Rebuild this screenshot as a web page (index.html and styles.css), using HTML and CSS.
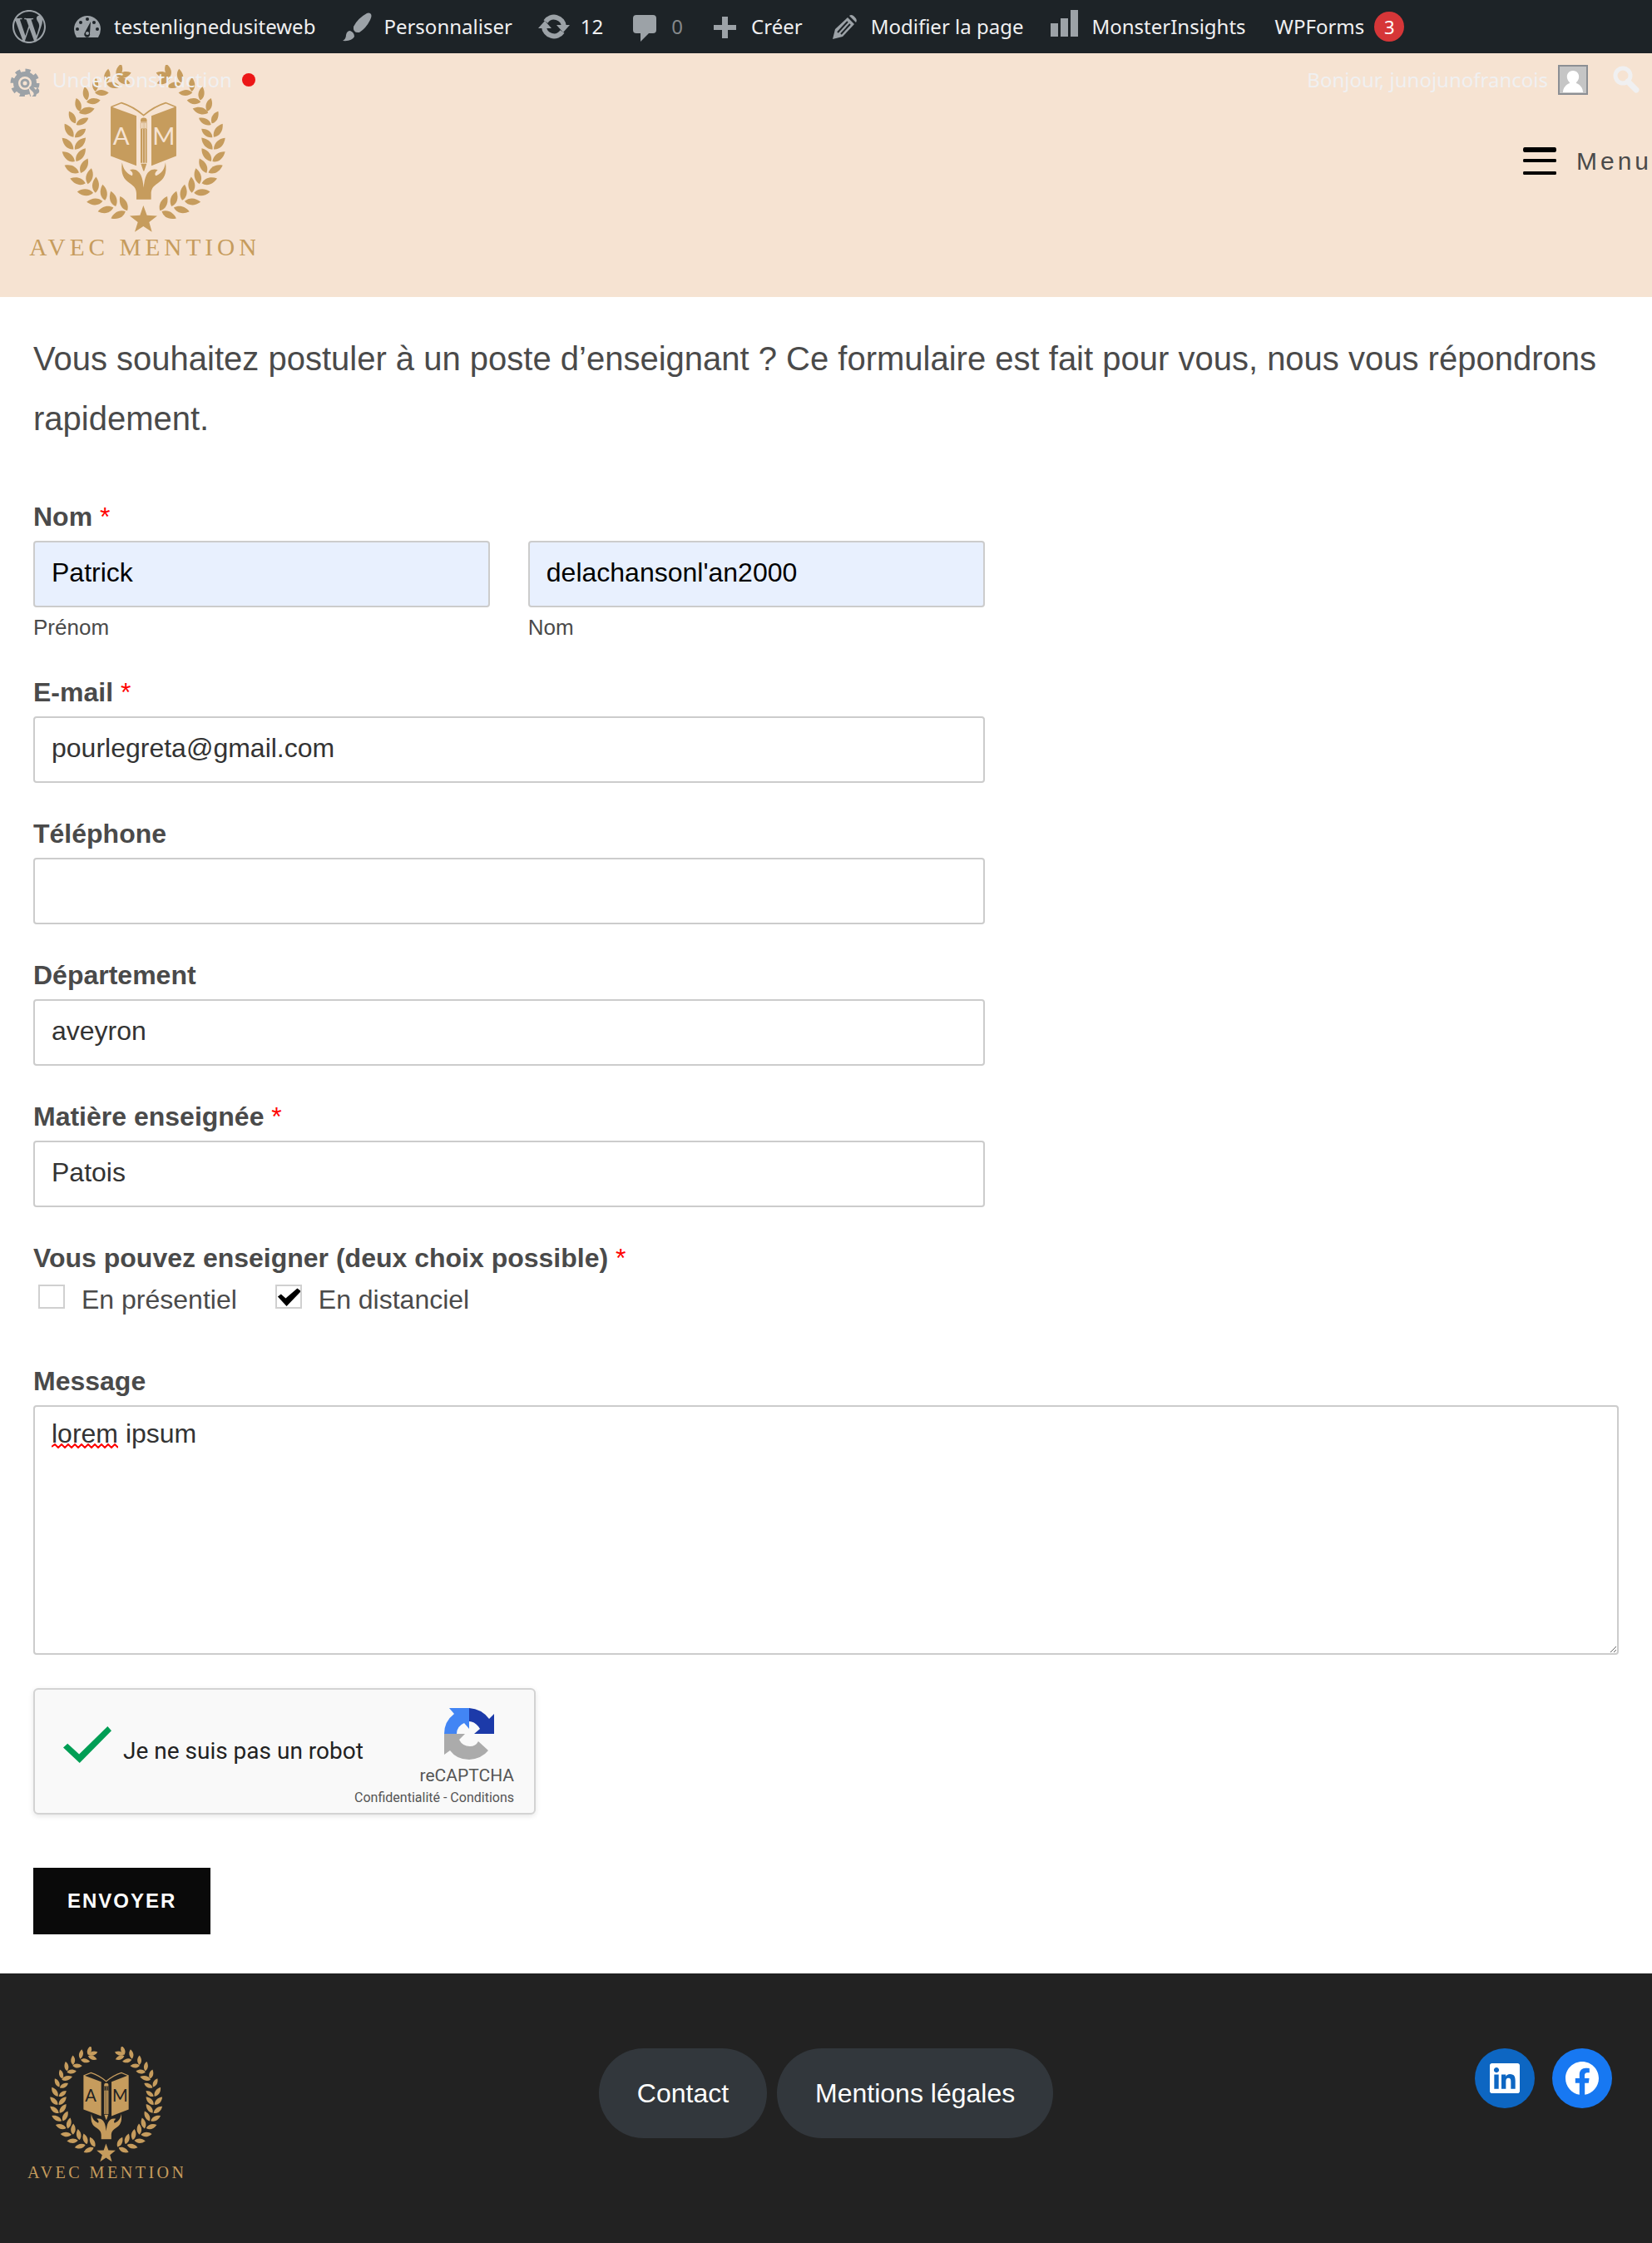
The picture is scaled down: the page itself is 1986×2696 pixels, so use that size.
FILE: index.html
```html
<!DOCTYPE html>
<html lang="fr">
<head>
<meta charset="utf-8">
<meta name="viewport" content="width=device-width, initial-scale=1">
<title>Postuler – Avec Mention</title>
<link rel="stylesheet" href="styles.css">
</head>
<body>
<svg class="sprite" aria-hidden="true">
  <defs>
    <path id="leaf" d="M0-2C-15-14-18-38 0-60C15-42 16-18 0-2Z"/>
    <path id="leaf-s" d="M0-2C-13-12-16-32-1-52C14-38 14-16 0-2Z"/>
    <g id="branch">
      <use href="#leaf-s" transform="translate(303 100) rotate(16)"/>
      <use href="#leaf-s" transform="translate(303 97) rotate(74)"/>
      <use href="#leaf-s" transform="translate(301 102) rotate(112)"/>
      <use href="#leaf-s" transform="translate(262 120) rotate(10)"/>
      <use href="#leaf-s" transform="translate(262 122) rotate(102)"/>
      <use href="#leaf-s" transform="translate(224 152)"/>
      <use href="#leaf-s" transform="translate(220 154) rotate(92)"/>
      <use href="#leaf-s" transform="translate(194 184) rotate(-9)"/>
      <use href="#leaf-s" transform="translate(190 188) rotate(84)"/>
      <use href="#leaf-s" transform="translate(169 224) rotate(-15)"/>
      <use href="#leaf" transform="translate(163 228) rotate(74)"/>
      <use href="#leaf-s" transform="translate(153 267) rotate(-27)"/>
      <use href="#leaf-s" transform="translate(153 271) rotate(62)"/>
      <use href="#leaf" transform="translate(146 316) rotate(-34)"/>
      <use href="#leaf-s" transform="translate(148 317) rotate(53)"/>
      <use href="#leaf" transform="translate(146 360) rotate(-45)"/>
      <use href="#leaf" transform="translate(148 361) rotate(43)"/>
      <use href="#leaf" transform="translate(151 404) rotate(-52)"/>
      <use href="#leaf" transform="translate(153 404) rotate(36)"/>
      <use href="#leaf" transform="translate(166 444) rotate(-63)"/>
      <use href="#leaf" transform="translate(170 446) rotate(26)"/>
      <use href="#leaf" transform="translate(190 482) rotate(-73)"/>
      <use href="#leaf" transform="translate(196 486) rotate(13)"/>
      <use href="#leaf" transform="translate(218 516) rotate(-86)"/>
      <use href="#leaf" transform="translate(224 518) rotate(2)"/>
      <use href="#leaf" transform="translate(252 546) rotate(-93)"/>
      <use href="#leaf" transform="translate(259 545) rotate(-9)"/>
      <use href="#leaf" transform="translate(291 569) rotate(-104)"/>
      <use href="#leaf" transform="translate(298 567) rotate(-18)"/>
      <use href="#leaf" transform="translate(334 582) rotate(-116)"/>
      <use href="#leaf" transform="translate(340 582) rotate(-27)"/>
    </g>
    <symbol id="logo" viewBox="-15 54 816 694">
      <use href="#branch"/>
      <use href="#branch" transform="translate(796 0) scale(-1 1)"/>
      <path d="M279 204L372 238V418L279 383ZM516 204L426 238V418L516 383Z"/>
      <path d="M281 206L318 191Q360 204 398 236Q436 204 478 191L514 206" fill="none" stroke="currentColor" stroke-width="5"/>
      <path d="M387 260V255Q387 245 398 245Q410 245 410 255V260Z"/>
      <path d="M388 262H409V284H388ZM396 263V283M402 263V283" fill="none" stroke="currentColor" stroke-width="2"/>
      <path d="M387 285H393V408H387ZM395 285H402V408H395ZM404 285H410V408H404ZM388 411H409L400 437H397Z"/>
      <path d="M320 406C315 450 326 466 348 481C366 493 372 503 372 520V540H425V520C425 503 431 493 449 481C471 466 483 450 477 406C473 432 464 444 443 454C436 450 440 440 449 433C430 427 416 436 408 452C402 464 400 480 398 497C396 480 394 464 388 452C380 436 366 427 348 433C358 440 361 448 356 454C334 444 325 430 320 406Z"/>
      <path d="M397 562L410 597L447 599L418 622L428 657L397 637L366 657L377 622L348 599L385 597Z"/>
      <text class="logo-letter" x="287" y="341">A</text>
      <text class="logo-letter" x="430" y="341">M</text>
      <text class="logo-name" x="-15" y="742">AVEC MENTION</text>
    </symbol>
  </defs>
</svg>

<nav class="adminbar" aria-label="Barre d’outils">
  <a href="#" aria-label="WordPress"><svg class="ab-icon" viewBox="0 0 24 24"><path d="M21.469 6.825c.84 1.537 1.318 3.3 1.318 5.175 0 3.979-2.156 7.456-5.363 9.325l3.295-9.527c.615-1.54.82-2.771.82-3.864 0-.405-.026-.78-.07-1.11m-7.981.105c.647-.03 1.232-.105 1.232-.105.582-.075.514-.93-.067-.899 0 0-1.755.135-2.88.135-1.064 0-2.85-.15-2.85-.15-.585-.03-.661.855-.075.885 0 0 .54.061 1.125.09l1.68 4.605-2.37 7.08L5.354 6.9c.649-.03 1.234-.1 1.234-.1.585-.075.516-.93-.065-.896 0 0-1.746.138-2.874.138-.2 0-.438-.008-.69-.015C4.911 3.15 8.235 1.215 12 1.215c2.809 0 5.365 1.072 7.286 2.833-.046-.003-.091-.009-.141-.009-1.06 0-1.812.923-1.812 1.914 0 .89.513 1.643 1.06 2.531.411.72.89 1.643.89 2.977 0 .915-.354 1.994-.821 3.479l-1.075 3.585-3.9-11.61.001.014zM12 22.784c-1.059 0-2.081-.153-3.048-.437l3.237-9.406 3.315 9.087c.024.053.05.101.078.149-1.12.393-2.325.609-3.582.609M1.211 12c0-1.564.336-3.05.935-4.39L7.29 21.709C3.694 19.96 1.212 16.271 1.211 12M12 0C5.385 0 0 5.385 0 12s5.385 12 12 12 12-5.385 12-12S18.615 0 12 0"/></svg></a>
  <a href="#"><svg class="ab-icon" viewBox="0 0 40 40"><path d="M7 33Q4 28 4 23A16 16 0 0 1 36 23Q36 28 33 33Z"/><g fill="#1d2327"><circle cx="20" cy="11" r="2"/><circle cx="12" cy="15" r="2"/><circle cx="28" cy="15" r="2"/><circle cx="8" cy="23" r="2"/><circle cx="32" cy="23" r="2"/><path d="M24 14L23 28A3.500 3.500 0 1 1 17 27Z"/></g><circle cx="20" cy="28" r="2"/></svg>testenlignedusiteweb</a>
  <a href="#"><svg class="ab-icon" viewBox="0 0 40 40"><path d="M36 4Q39 6 36 12Q31 22 23 27Q15 28 16 20Q21 10 32 4Q34 3 36 4ZM12 25Q17 27 17 32Q14 38 3 37Q7 35 7 30Q8 25 12 25Z"/></svg>Personnaliser</a>
  <a href="#"><svg class="ab-icon" viewBox="0 0 40 40"><path d="M10 14A12 12 0 0 1 32 20M30 26A12 12 0 0 1 8 20" fill="none" stroke="currentColor" stroke-width="6"/><path d="M1 22L9 13L17 22ZM23 18H39L31 27Z"/></svg>12</a>
  <a class="muted" href="#"><svg class="ab-icon" viewBox="0 0 40 40"><path d="M10 6H30Q34 6 34 10V24Q34 28 30 28H25L15 38V28H10Q6 28 6 24V10Q6 6 10 6Z"/></svg>0</a>
  <a href="#"><svg class="ab-icon" viewBox="0 0 40 40"><path d="M17 8H24V18H34V24H24V34H17V24H7V18H17Z"/></svg>Créer</a>
  <a href="#"><svg class="ab-icon" viewBox="0 0 40 40"><path d="M26 7L34 15Q36 12 33 9L31 7Q28 5 26 7ZM24 9L32 17L18 32L6 35L9 23Z"/><path d="M12 27L24 14M16 29L27 17" stroke="#1d2327" stroke-width="2"/></svg>Modifier la page</a>
  <a href="#"><svg class="ab-icon" viewBox="0 0 40 40"><path d="M3 16H12V32H3ZM15 10H24V32H15ZM27 0H36V32H27Z"/></svg>MonsterInsights</a>
  <a class="wpforms" href="#">WPForms<span class="count">3</span></a>
</nav>

<header class="site-header">
  <div class="adminbar-overflow">
    <a href="#"><svg class="ab-icon" viewBox="-1 -8 40 40"><g fill="none" stroke="currentColor"><circle cx="18" cy="16" r="11" stroke-width="6"/><circle cx="18" cy="16" r="15" stroke-width="5" stroke-dasharray="6 5.780"/><circle cx="18" cy="16" r="4" stroke-width="3"/></g><path d="M22 20L37 22V35H26Z" fill="#f6e3d2"/><path d="M24 20L27 19L31 24Q33 22 32 20L35 24Q36 28 32 29L31 32L26 32Q30 30 28 27L23 22Z"/></svg>UnderConstruction<span class="status"></span></a>
    <a class="account" href="#">Bonjour, junojunofrancois<svg class="avatar" viewBox="0 0 36 36"><path d="M0 0H36V36H0Z" fill="#8c8f94"/><path d="M2 2H34V34H2Z" fill="#c5c5c5"/><path d="M18 7C23 7 26 11 25 16C24 20 22 20 22 22C27 24 30 28 30 33H6C6 28 9 24 14 22C14 20 12 20 11 16C10 11 13 7 18 7Z" fill="#fff"/></svg></a>
    <a class="search" href="#" aria-label="Rechercher"><svg class="ab-icon" viewBox="0 0 40 40"><circle cx="16" cy="15" r="9" fill="none" stroke="currentColor" stroke-width="5"/><path d="M22 22L32 32" stroke="currentColor" stroke-width="7" stroke-linecap="round"/></svg></a>
  </div>
  <a class="brand" href="#" aria-label="Avec Mention"><svg class="logo"><use href="#logo"/></svg></a>
  <button class="menu-button" type="button"><svg class="burger" viewBox="0 0 40 34"><path d="M2 0H38Q40 0 40 3Q40 6 38 6H2Q0 6 0 3Q0 0 2 0ZM1 14H39Q40 14 40 16T39 18H1Q0 18 0 16T1 14ZM1 29H39Q40 29 40 31T39 33H1Q0 33 0 31T1 29Z"/></svg>Menu</button>
</header>

<main class="content">
  <p class="intro">Vous souhaitez postuler à un poste d’enseignant ? Ce formulaire est fait pour vous, nous vous répondrons rapidement.</p>
  <form class="form">
    <fieldset class="field medium">
      <legend class="label">Nom <span class="required">*</span></legend>
      <div class="name-row">
        <div class="name-part"><input class="input autofilled" id="prenom" type="text" value="Patrick"><label class="sublabel" for="prenom">Prénom</label></div>
        <div class="name-part"><input class="input autofilled" id="nom" type="text" value="delachansonl'an2000"><label class="sublabel" for="nom">Nom</label></div>
      </div>
    </fieldset>
    <div class="field medium"><label class="label" for="email">E-mail <span class="required">*</span></label><input class="input" id="email" type="email" value="pourlegreta@gmail.com"></div>
    <div class="field medium"><label class="label" for="tel">Téléphone</label><input class="input" id="tel" type="tel"></div>
    <div class="field medium"><label class="label" for="dep">Département</label><input class="input" id="dep" type="text" value="aveyron"></div>
    <div class="field medium"><label class="label" for="matiere">Matière enseignée <span class="required">*</span></label><input class="input" id="matiere" type="text" value="Patois"></div>
    <fieldset class="field choices">
      <legend class="label">Vous pouvez enseigner (deux choix possible) <span class="required">*</span></legend>
      <div class="choice-row">
        <label class="choice"><input class="checkbox" type="checkbox">En présentiel</label>
        <label class="choice"><input class="checkbox" type="checkbox" checked>En distanciel</label>
      </div>
    </fieldset>
    <div class="field message">
      <label class="label" for="message">Message</label>
      <textarea class="input textarea" id="message" spellcheck="false">lorem ipsum</textarea>
      <svg class="squiggle" viewBox="0 0 80 6"><path d="M0 4L4 1L8 5L12 1L16 5L20 1L24 5L28 1L32 5L36 1L40 5L44 1L48 5L52 1L56 5L60 1L64 5L68 1L72 5L76 1L80 5" fill="none" stroke="#f00" stroke-width="2"/></svg>
    </div>
    <div class="captcha">
      <label class="robot"><input class="robot-check" type="checkbox" checked>Je ne suis pas un robot</label>
      <div class="captcha-brand">
        <svg class="captcha-logo" viewBox="0 0 60 62"><path d="M60 31V7L54 13Q45 1 30 0V16Q36 16 41 22L43 25L36 31Z" fill="#1c3aa9"/><path d="M30 0H6L12 7Q0 16 0 31H15Q15 22 24 18L30 25Z" fill="#4285f4"/><path d="M0 31V56L7 51Q15 62 30 62Q45 61 53 51L41 40Q38 46 31 46Q22 46 18 38L25 31Z" fill="#ababab"/></svg>
        <span class="captcha-name">reCAPTCHA</span>
        <span class="captcha-links"><a href="#">Confidentialité</a> - <a href="#">Conditions</a></span>
      </div>
    </div>
    <button class="submit" type="submit">ENVOYER</button>
  </form>
</main>

<footer class="site-footer">
  <a class="footer-brand" href="#" aria-label="Avec Mention"><svg class="logo"><use href="#logo"/></svg></a>
  <nav class="footer-nav"><a href="#">Contact</a><a href="#">Mentions légales</a></nav>
  <div class="social">
    <a class="linkedin" href="#" aria-label="LinkedIn"><svg viewBox="0 0 24 24"><path d="M19.7,3H4.3C3.582,3,3,3.582,3,4.3v15.4C3,20.418,3.582,21,4.3,21h15.4c0.718,0,1.3-0.582,1.3-1.3V4.3 C21,3.582,20.418,3,19.7,3z M8.339,18.338H5.667v-8.59h2.672V18.338z M7.004,8.574c-0.857,0-1.549-0.694-1.549-1.548 c0-0.855,0.691-1.548,1.549-1.548c0.854,0,1.547,0.694,1.547,1.548C8.551,7.881,7.858,8.574,7.004,8.574z M18.339,18.338h-2.669 v-4.177c0-0.996-0.017-2.278-1.387-2.278c-1.389,0-1.601,1.086-1.601,2.206v4.249h-2.667v-8.59h2.559v1.174h0.037 c0.356-0.675,1.227-1.387,2.526-1.387c2.703,0,3.203,1.779,3.203,4.092V18.338z"/></svg></a>
    <a class="facebook" href="#" aria-label="Facebook"><svg viewBox="0 0 24 24"><path d="M12 2C6.500 2 2 6.500 2 12c0 5 3.700 9.100 8.400 9.900v-7H7.900V12h2.500V9.800c0-2.500 1.500-3.900 3.800-3.900 1.100 0 2.200.2 2.200.2v2.500h-1.300c-1.200 0-1.600.8-1.600 1.600V12h2.800l-.4 2.900h-2.300v7C18.300 21.100 22 17 22 12c0-5.500-4.500-10-10-10z"/></svg></a>
  </div>
</footer>
</body>
</html>
```
FILE: styles.css
```css
*, *::before, *::after { box-sizing: border-box; }

body {
  display: flex;
  flex-direction: column;
  min-height: 100vh;
  margin: 0;
  background: #fff;
  color: #4a4a4a;
  font-family: "Liberation Sans", Arial, sans-serif;
  font-size: 32px;
}

a { color: inherit; text-decoration: none; }
svg { display: block; fill: currentColor; }
button, input, textarea { font: inherit; }
.sprite { position: absolute; width: 0; height: 0; }

/* Admin toolbar */
.adminbar, .adminbar-overflow {
  display: flex;
  align-items: center;
  height: 64px;
  padding: 0 15px;
  color: #f0f0f1;
  font-family: "Noto Sans", "Segoe UI", sans-serif;
  font-size: 24px;
  line-height: 66px;
  white-space: nowrap;
}
.adminbar { gap: 30px; background: #1d2327; }
.adminbar a, .adminbar-overflow a { display: flex; align-items: center; gap: 12px; }
.ab-icon { flex: none; width: 40px; height: 40px; color: #9ca2a7; }
.adminbar .muted { color: #84888b; }
.adminbar .wpforms { margin-left: 5px; }
.count {
  width: 36px;
  height: 36px;
  border-radius: 50%;
  background: #d63638;
  color: #fff;
  font-size: 22px;
  line-height: 36px;
  text-align: center;
}
.adminbar-overflow {
  position: absolute;
  top: 0;
  left: 0;
  right: 0;
  padding: 0 11px;
}
.status { width: 16px; height: 16px; border-radius: 50%; background: #ec1717; }
.adminbar-overflow .account { margin-left: auto; }
.avatar { width: 36px; height: 36px; }
.adminbar-overflow .search { margin-left: 26px; }
.search .ab-icon { color: #f0f0f1; }

/* Header */
.site-header {
  --cut: #f6e3d2;
  position: relative;
  display: flex;
  align-items: center;
  justify-content: space-between;
  padding: 14px 0 48px 35px;
  background: #f6e3d2;
}
.logo { width: 272px; height: 231px; color: #c69c5d; }
.logo-letter { fill: var(--cut); font: 88px Lato, sans-serif; }
.logo-name { font: 88px "Liberation Serif", serif; letter-spacing: 15px; }
.menu-button {
  display: flex;
  align-items: center;
  gap: 24px;
  padding: 0;
  border: 0;
  background: none;
  color: #4a4a4a;
  font-size: 30px;
  letter-spacing: 4px;
}
.burger { width: 40px; height: 34px; color: #000; }

/* Content */
.content { padding: 38px 40px 47px; }
.intro { margin: 0 0 61px; font-size: 40px; line-height: 72px; }
.form { display: flex; flex-direction: column; align-items: flex-start; gap: 40px; }
.field { display: flex; flex-direction: column; width: 100%; min-width: 0; margin: 0; padding: 0; border: 0; }
.medium { width: 60%; }
.label { padding: 0; margin-bottom: 8px; font-weight: 700; line-height: 42px; }
.required { color: #f00; font-weight: 400; }
.input {
  width: 100%;
  height: 80px;
  padding: 0 20px 4px;
  border: 2px solid #ccc;
  border-radius: 4px;
  background: #fff;
  color: #333;
}
.autofilled { background: #e8f0fe; color: #000; }
.name-row { display: grid; grid-template-columns: 1fr 1fr; gap: 46px; }
.name-part { display: flex; flex-direction: column; gap: 8px; }
.sublabel { font-size: 26px; line-height: 33px; }
.choices { padding-bottom: 16px; }
.choice-row { display: flex; gap: 46px; padding-left: 6px; }
.choice { display: flex; align-items: center; gap: 20px; line-height: 42px; }
.checkbox {
  appearance: none;
  width: 32px;
  height: 29px;
  margin: 0 0 8px;
  border: 2px solid #d0d0d0;
  background: #fff;
}
.checkbox:checked::before, .robot-check:checked::before {
  content: "";
  display: block;
  width: 100%;
  height: 100%;
}
.checkbox:checked::before {
  background: #000;
  clip-path: polygon(4% 52%, 18% 40%, 38% 60%, 88% 12%, 104% 26%, 42% 98%);
}
.message { position: relative; }
.textarea { display: block; height: 300px; padding: 11px 20px; line-height: 42px; resize: vertical; }
.squiggle { position: absolute; top: 96px; left: 22px; width: 80px; height: 6px; }

.captcha {
  display: flex;
  align-items: flex-start;
  justify-content: space-between;
  width: 604px;
  max-width: 100%;
  height: 152px;
  padding: 22px 24px 0 34px;
  border: 2px solid #d3d3d3;
  border-radius: 6px;
  background: #f9f9f9;
  box-shadow: 0 2px 6px rgba(0, 0, 0, .1);
  font-family: Roboto, sans-serif;
}
.robot {
  display: flex;
  flex: none;
  align-items: flex-end;
  gap: 14px;
  margin-top: 22px;
  color: #222;
  font-size: 28px;
  line-height: 32px;
}
.robot-check { appearance: none; width: 58px; height: 44px; margin: 0 0 2px; }
.robot-check:checked::before {
  background: #009e55;
  clip-path: polygon(0 58%, 9% 47%, 33% 76%, 92% 0, 100% 12%, 34% 100%);
}
/* The links line is wider than the badge and runs out to its left */
.captcha-brand {
  display: flex;
  flex-direction: column;
  align-items: flex-end;
  width: 108px;
  color: #555;
  white-space: nowrap;
}
.captcha-logo { width: 60px; height: 62px; margin-right: 24px; }
.captcha-name { margin-top: 7px; font-size: 21px; line-height: 24px; }
.captcha-links { margin-top: 3px; font-size: 16px; line-height: 24px; }

.submit {
  height: 80px;
  margin-top: 24px;
  padding: 0 41px;
  border: 0;
  background: #0a0a0a;
  color: #fff;
  font-size: 24px;
  font-weight: 700;
  letter-spacing: 2px;
}

/* Footer */
.site-footer {
  --cut: #222;
  flex: 1;
  display: grid;
  grid-template-columns: 1fr auto 1fr;
  align-items: start;
  padding: 88px 33px 75px;
  background: #222;
}
.site-footer .logo { width: 187px; height: 159px; }
.footer-nav { display: flex; gap: 12px; padding-top: 2px; color: #fff; line-height: 108px; }
.footer-nav a { padding: 0 46px; border-radius: 54px; background: #32373c; }
.social { display: flex; justify-content: flex-end; gap: 21px; padding: 2px 15px 0 0; }
.social a { width: 72px; height: 72px; padding: 12px; border-radius: 50%; color: #fff; }
.linkedin { background: #0d66c2; }
.facebook { background: #1778f2; }
```
